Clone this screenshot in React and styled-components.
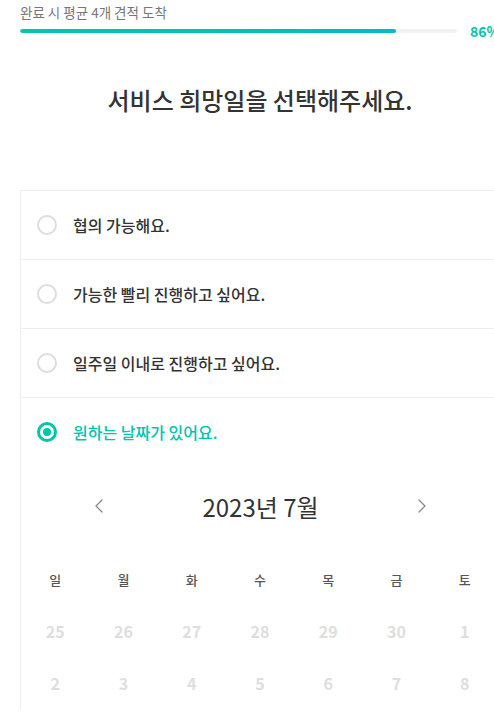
import React from 'react';
import styled, { createGlobalStyle } from 'styled-components';

const teal = '#00c4ad';

const GlobalStyle = createGlobalStyle`
  html, body {
    margin: 0;
    padding: 0;
    overflow: hidden;
    background: #fff;
  }
  body {
    font-family: 'Noto Sans CJK KR', 'Noto Sans', sans-serif;
    color: #333;
  }
`;

const Page = styled.div`
  width: 480px;
  padding: 0 20px;
`;

const Caption = styled.p`
  margin: 3px 0 0;
  font-size: 13.5px;
  line-height: 18px;
  color: #777;
`;

const BarRow = styled.div`
  display: flex;
  align-items: center;
  gap: 13px;
  height: 18px;
  margin-top: 1px;
`;

const Track = styled.div`
  flex: 1;
  height: 4px;
  border-radius: 2px;
  background: #f2f2f2;
  overflow: hidden;
`;

const Fill = styled.div`
  height: 100%;
  border-radius: 2px;
  background: linear-gradient(90deg, #00c7ab, #00bbc9);
`;

const Percent = styled.span`
  width: 30px;
  font-size: 14px;
  font-weight: 700;
  color: ${teal};
  white-space: nowrap;
`;

const Title = styled.h1`
  margin: 44px 0 74px;
  font-size: 24px;
  line-height: 32px;
  font-weight: 500;
  text-align: center;
  color: #333;
`;

const OptionList = styled.div`
  border-top: 1px solid #eee;
  border-left: 1px solid #eee;
`;

const OptionItem = styled.div`
  border-bottom: ${(p) => (p.$last ? 'none' : '1px solid #eee')};
`;

const OptionHead = styled.label`
  display: flex;
  align-items: center;
  gap: 16px;
  height: 68px;
  padding-left: 16px;
  cursor: pointer;
`;

const Radio = styled.span`
  box-sizing: border-box;
  width: 20px;
  height: 20px;
  border-radius: 50%;
  border: ${(p) => (p.$checked ? `3px solid ${teal}` : '2px solid #ddd')};
  display: flex;
  align-items: center;
  justify-content: center;

  &::after {
    content: '';
    display: ${(p) => (p.$checked ? 'block' : 'none')};
    width: 8px;
    height: 8px;
    border-radius: 50%;
    background: ${teal};
  }
`;

const OptionLabel = styled.span`
  font-size: 16px;
  font-weight: 500;
  color: ${(p) => (p.$checked ? teal : '#333')};
`;

const Calendar = styled.div`
  padding-top: 20px;
`;

const MonthNav = styled.div`
  width: 338px;
  height: 40px;
  margin: 0 auto 27px;
  display: flex;
  align-items: center;
  justify-content: space-between;
`;

const Arrow = styled.button`
  width: 14px;
  height: 16px;
  padding: 0;
  border: none;
  background: none;
  display: flex;
  align-items: center;
  justify-content: center;
  cursor: pointer;
`;

const MonthLabel = styled.span`
  font-size: 24px;
  font-weight: 400;
  color: #333;
`;

const Grid = styled.div`
  display: grid;
  grid-template-columns: repeat(7, 1fr);
  grid-auto-rows: 52px;
  width: 478px;
`;

const Weekday = styled.span`
  display: flex;
  align-items: center;
  justify-content: center;
  font-size: 13px;
  font-weight: 500;
  color: #555;
`;

const Day = styled.span`
  display: flex;
  align-items: center;
  justify-content: center;
  font-size: 16px;
  font-weight: 600;
  color: ${(p) => (p.$muted ? '#dedede' : '#333')};
`;

const Chevron = ({ dir }) => (
  <svg width="8" height="14" viewBox="0 0 8 14" fill="none">
    <path
      d={dir === 'left' ? 'M7 1L1 7l6 6' : 'M1 1l6 6-6 6'}
      stroke="#888"
      strokeWidth="1.3"
      strokeLinecap="round"
      strokeLinejoin="round"
    />
  </svg>
);

const options = [
  '협의 가능해요.',
  '가능한 빨리 진행하고 싶어요.',
  '일주일 이내로 진행하고 싶어요.',
  '원하는 날짜가 있어요.',
];

const weekdays = ['일', '월', '화', '수', '목', '금', '토'];
const days = [25, 26, 27, 28, 29, 30, 1, 2, 3, 4, 5, 6, 7, 8];

export default function App() {
  const selected = 3;
  return (
    <Page>
      <GlobalStyle />
      <Caption>완료 시 평균 4개 견적 도착</Caption>
      <BarRow>
        <Track>
          <Fill style={{ width: '86%' }} />
        </Track>
        <Percent>86%</Percent>
      </BarRow>
      <Title>서비스 희망일을 선택해주세요.</Title>
      <OptionList>
        {options.map((text, i) => (
          <OptionItem key={text} $last={i === options.length - 1}>
            <OptionHead>
              <Radio $checked={i === selected} />
              <OptionLabel $checked={i === selected}>{text}</OptionLabel>
            </OptionHead>
            {i === selected && (
              <Calendar>
                <MonthNav>
                  <Arrow aria-label="이전 달">
                    <Chevron dir="left" />
                  </Arrow>
                  <MonthLabel>2023년 7월</MonthLabel>
                  <Arrow aria-label="다음 달">
                    <Chevron dir="right" />
                  </Arrow>
                </MonthNav>
                <Grid>
                  {weekdays.map((w) => (
                    <Weekday key={w}>{w}</Weekday>
                  ))}
                  {days.map((d, idx) => (
                    <Day key={idx} $muted>
                      {d}
                    </Day>
                  ))}
                </Grid>
              </Calendar>
            )}
          </OptionItem>
        ))}
      </OptionList>
    </Page>
  );
}
